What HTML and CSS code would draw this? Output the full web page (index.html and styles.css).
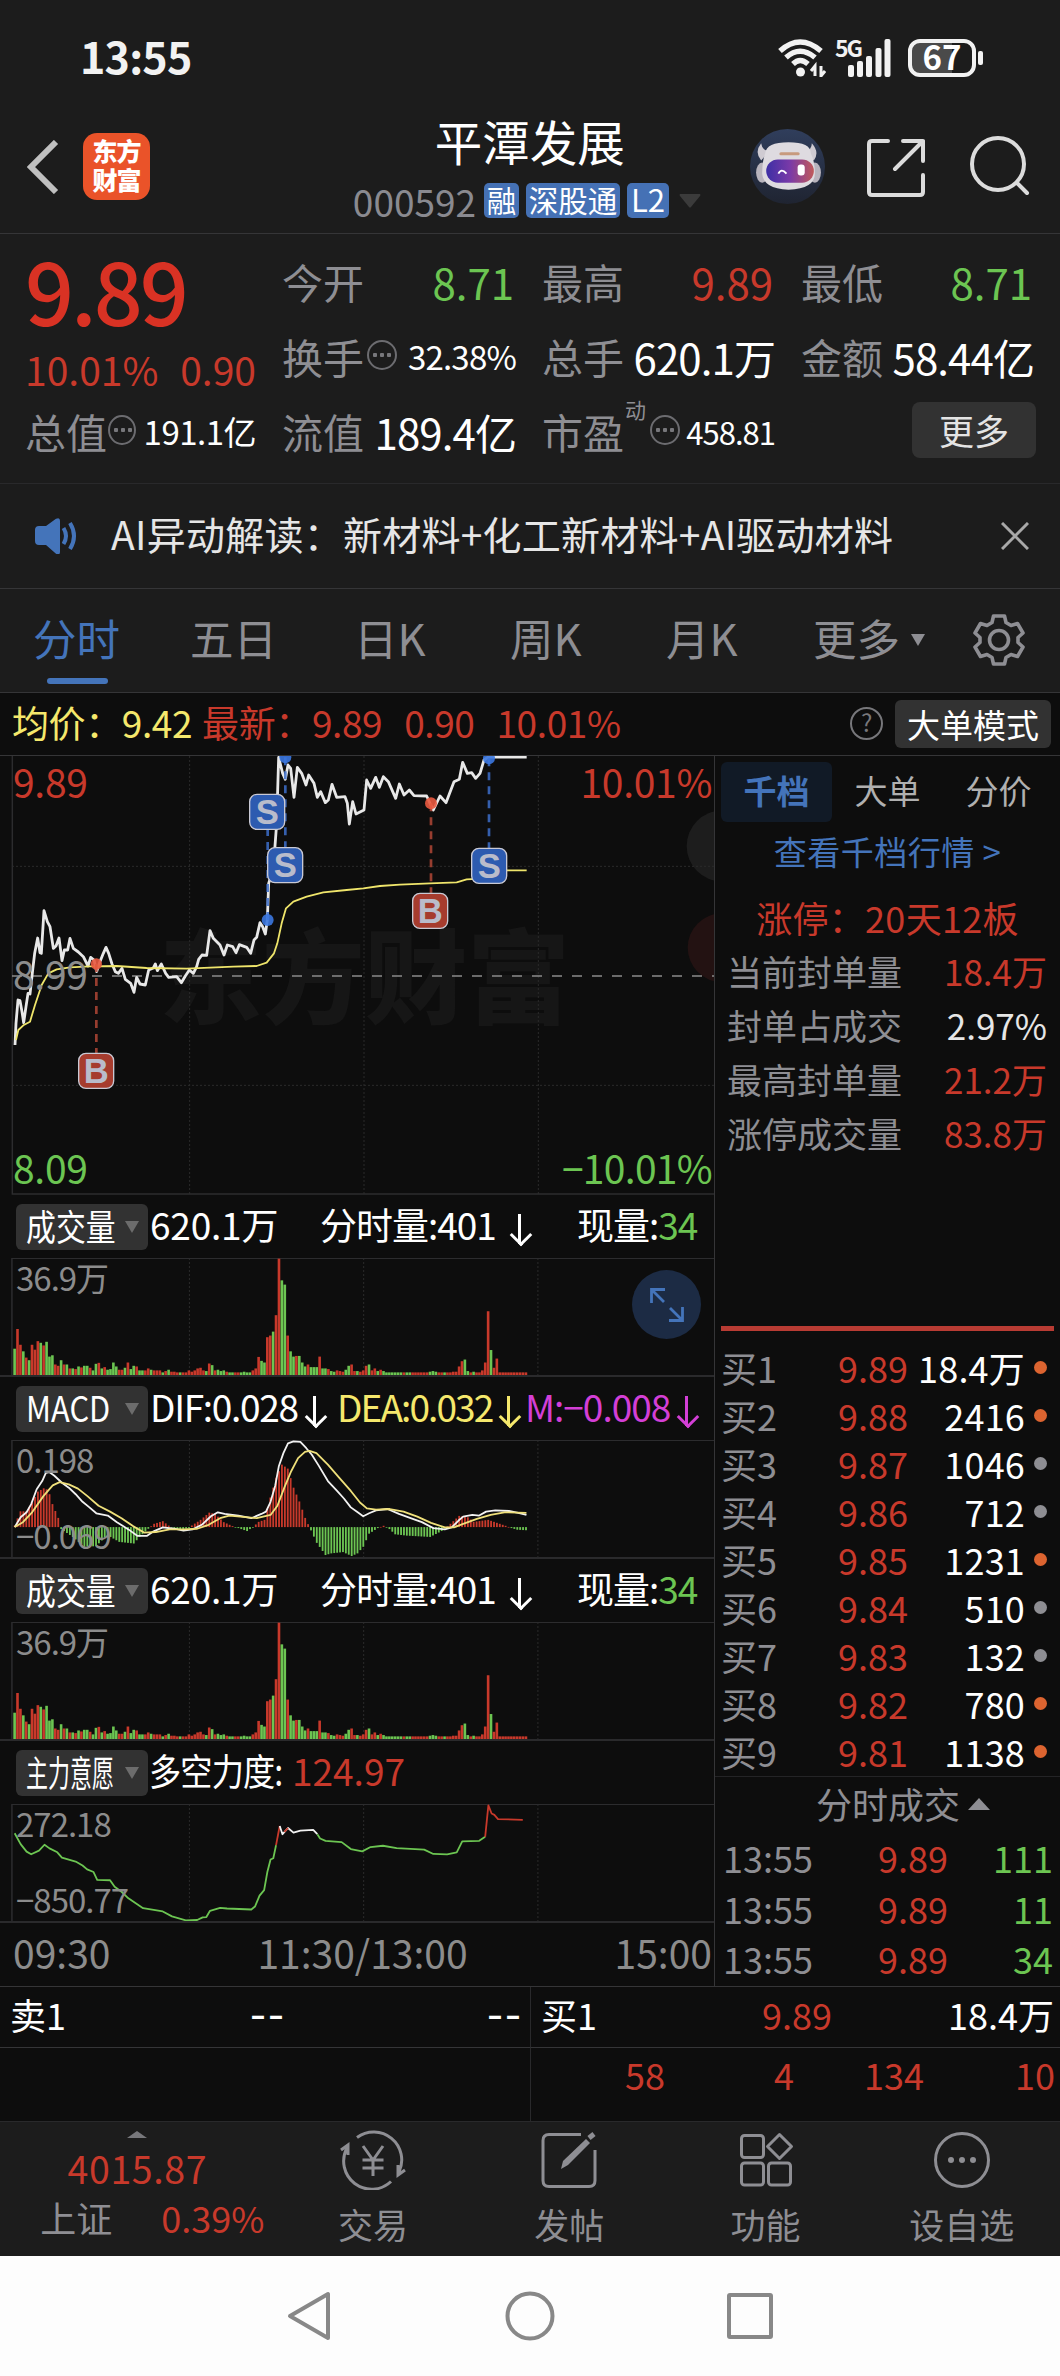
FILE: index.html
```
<!DOCTYPE html>
<html lang="zh-CN">
<head>
    <meta charset="UTF-8">
    <meta name="viewport" content="width=device-width, initial-scale=1.0">
    <title>平潭发展 000592</title>
    <link rel="stylesheet" href="styles.css">
</head>
<body>
    <div class="status-bar">
        <span class="clock">13:55</span>
        <div class="status-icons">
            <svg class="wifi" viewBox="0 0 48 38" fill="none" stroke="#f2f2f2" stroke-width="5.4">
                <path d="M2 12Q22 -6 43 12M8 18.500Q22 6 37 18.500M15 25Q22 18 30 25"/>
                <circle cx="22.500" cy="33" r="4.500" fill="#f2f2f2" stroke="none"/>
                <path d="M37 37V27l-4 5M43 27v10l4-5" stroke-width="3"/>
            </svg>
            <div class="signal">
                <span class="net">5G</span>
                <svg viewBox="0 0 43 38" fill="#f2f2f2">
                    <rect x="0" y="26" width="6" height="12" rx="2"/>
                    <rect x="9" y="22" width="6" height="16" rx="2"/>
                    <rect x="18" y="17" width="6" height="21" rx="2"/>
                    <rect x="27.500" y="9" width="6" height="29" rx="2"/>
                    <rect x="36.500" y="0" width="6" height="38" rx="2"/>
                </svg>
            </div>
            <div class="battery"><span>67</span></div>
            <i class="battery-nub"></i>
        </div>
    </div>

    <header class="header">
        <svg class="back" viewBox="0 0 32 54" fill="none" stroke="#c0c0c0" stroke-width="6"><path d="M29 2L4 27l25 25"/></svg>
        <div class="logo">东方<br>财富</div>
        <div class="title">
            <h1>平潭发展</h1>
            <div class="sub">
                <span class="code">000592</span>
                <span class="tag">融</span>
                <span class="tag">深股通</span>
                <span class="tag wide">L2</span>
                <svg class="caret" viewBox="0 0 22 14" fill="#3b3b3b"><path d="M1 0h20q1 1 0 2l-9 11q-1 1-2 0L1 2q-1-1 0-2z"/></svg>
            </div>
        </div>
        <svg class="robot" viewBox="0 0 74 74">
            <defs>
                <linearGradient id="visor" x1="0" x2="1"><stop offset="0" stop-color="#3d2fa5"/><stop offset=".5" stop-color="#7a3aa8"/><stop offset="1" stop-color="#c05a5a"/></linearGradient>
                <linearGradient id="sky" x2="0" y2="1"><stop offset="0" stop-color="#303e5c"/><stop offset="1" stop-color="#1f2431"/></linearGradient>
            </defs>
            <circle cx="37" cy="37" r="37" fill="url(#sky)"/>
            <path d="M11 14q-7 9 0 17l8-9q-7-1-8-8zM61 14q8 9 2 17l-9-9q7-1 7-8z" fill="#cfcbd2"/>
            <ellipse cx="12" cy="43" rx="6" ry="10" fill="#b8b4bd"/><ellipse cx="64" cy="43" rx="6" ry="10" fill="#b8b4bd"/>
            <path d="M15 24q1-11 23-11t22 11q4 8 4 20 0 15-26 16-25-1-26-16 0-12 3-20z" fill="#dedbe0"/>
            <rect x="16" y="30" width="47" height="23" rx="11.500" fill="url(#visor)"/>
            <path d="M28 44q3-6 8 0" fill="none" stroke="#fff" stroke-width="1.800"/>
            <rect x="47" y="35" width="7" height="11" rx="3" fill="#fff"/>
            <rect x="29" y="23" width="20" height="3" rx="1.500" fill="#c79a7e"/>
        </svg>
        <svg class="share" viewBox="0 0 58 60" fill="none" stroke="#dcdcdc" stroke-width="4" stroke-linecap="round" stroke-linejoin="round">
            <path d="M21 4H5q-3 0-3 3v48q0 3 3 3h48q3 0 3-3V38M36 4h20v20M56 4L28 32"/>
        </svg>
        <svg class="search" viewBox="0 0 60 60" fill="none" stroke="#dcdcdc" stroke-width="4" stroke-linecap="round"><circle cx="28" cy="28" r="26"/><path d="M47 47l10 10"/></svg>
    </header>

    <section class="quote">
        <div class="main-price">
            <div class="price">9.89</div>
            <div class="change"><span>10.01%</span><span>0.90</span></div>
        </div>
        <div class="cell"><label>今开</label><b class="num green">8.71</b></div>
        <div class="cell"><label>最高</label><b class="num red">9.89</b></div>
        <div class="cell"><label>最低</label><b class="num green">8.71</b></div>
        <div class="cell"><label>换手</label><i class="more-dot"></i><b class="mid">32.38%</b></div>
        <div class="cell"><label>总手</label><b>620.1万</b></div>
        <div class="cell"><label>金额</label><b>58.44亿</b></div>
        <div class="cell"><label>总值</label><i class="more-dot"></i><b class="small">191.1亿</b></div>
        <div class="cell"><label>流值</label><b>189.4亿</b></div>
        <div class="cell"><label>市盈<sup>动</sup></label><i class="more-dot"></i><b class="small last">458.81</b></div>
        <div class="cell end"><button class="more-btn">更多</button></div>
    </section>

    <section class="notice">
        <svg class="speaker" viewBox="0 0 44 36"><path d="M1 12q0-4 4-4h7L22 .800q4-2 4 2v31q0 4-4 2L12 27H5q-4 0-4-4z" fill="#4474ba"/><path d="M29.500 10q5 8 0 16M36 5q8 13 0 26" fill="none" stroke="#4474ba" stroke-width="4"/></svg>
        <span class="notice-text">AI异动解读：新材料+化工新材料+AI驱动材料</span>
        <svg class="close" viewBox="0 0 28 28" stroke="#a8a8a8" stroke-width="3"><path d="M1 1l26 26M27 1L1 27"/></svg>
    </section>

    <nav class="tabs">
        <a class="active">分时</a>
        <a>五日</a>
        <a>日K</a>
        <a>周K</a>
        <a>月K</a>
        <a class="drop">更多<i class="tri"></i></a>
        <svg class="gear" viewBox="0 0 52 52" fill="none" stroke="#8e8e93" stroke-width="3.600" stroke-linejoin="round">
            <path d="M20.500 2h11l1.500 6.500 5 3 6.500-2 5.500 9.500-5 4.500v5l5 4.500-5.500 9.500-6.500-2-5 3-1.500 6.500h-11L19 43.500l-5-3-6.500 2L2 33l5-4.500v-5L2 19l5.500-9.500 6.500 2 5-3z"/>
            <circle cx="26" cy="26" r="9.500"/>
        </svg>
    </nav>

    <div class="info-bar">
        <span class="yellow avg">均价：9.42</span>
        <span class="red">最新：9.89</span>
        <span class="red">0.90</span>
        <span class="red">10.01%</span>
        <span class="help">?</span>
        <button class="mode-btn">大单模式</button>
    </div>

    <main class="board">
        <div class="charts">
            <div class="chart price-chart">
                <svg viewBox="0 48 2142 1317" preserveAspectRatio="none">
                    <text x="478" y="828" class="watermark">东方财富</text>
                    <circle cx="2166" cy="318" r="106" fill="#1d1d1d"/>
                    <circle cx="2166" cy="623" r="103" fill="#231212"/>
                    <g class="grid"><path d="M36 379H2142M36 1036H2142M569 48V1362M1092 48V1362M1615 48V1362"/></g>
                    <path class="frame" d="M37 48V1362H2142"/>
                    <path d="M36 708H2142" stroke="#8a8a8a" stroke-width="5" stroke-dasharray="30 30"/>
                    <polyline class="line thick" stroke="#e8e8e8" points="45,915 48,850 54,780 60,782 66,815 71,848 78,800 84,760 90,762 98,690 104,640 113,594 120,638 124,640 132,512 142,545 150,560 160,625 168,618 177,594 186,662 193,630 203,630 210,595 220,625 235,636 250,650 264,678 272,652 282,660 290,695 298,670 310,640 318,622 326,640 336,672 346,695 355,700 366,685 376,718 392,730 402,757 410,712 420,732 436,735 446,690 460,684 466,672 472,692 484,672 497,700 506,712 530,710 544,728 556,708 568,690 580,700 590,680 596,658 606,645 620,646 630,572 640,595 660,615 672,645 682,615 698,620 708,638 718,614 740,622 752,640 762,600 770,592 780,548 788,560 796,582 802,540 806,430 820,385 830,250 836,52 848,100 856,118 864,75 872,85 882,172 892,82 905,100 918,135 926,105 942,130 952,172 962,155 976,188 985,180 996,133 1010,172 1035,170 1042,190 1048,252 1058,185 1068,222 1092,210 1100,120 1112,145 1127,112 1138,142 1150,110 1165,125 1187,175 1198,132 1212,165 1228,150 1242,167 1280,168 1290,190 1300,210 1320,168 1338,188 1362,125 1378,118 1388,67 1402,100 1415,98 1427,115 1440,100 1452,60 1465,51 1580,51"/>
                    <polyline class="line" stroke="#efe56b" points="48,900 55,870 70,856 90,845 105,795 125,735 145,700 170,688 210,682 270,679 350,678 440,684 560,686 700,680 770,678 800,668 822,640 832,610 845,550 858,505 880,485 920,470 970,457 1040,450 1090,445 1140,438 1200,434 1290,430 1370,427 1400,418 1460,415 1480,395 1500,391 1580,391"/>
                    <g class="stem buy"><path d="M289 672V940M1293 190V460"/></g>
                    <g class="stem sell"><path d="M803 540V268M856 52V322M1467 55V325"/></g>
                    <g fill="#e8593f" opacity=".9"><circle cx="289" cy="672" r="17"/><circle cx="1293" cy="190" r="18"/></g>
                    <g fill="#3b77e0" opacity=".9"><circle cx="803" cy="540" r="18"/><circle cx="856" cy="52" r="18"/><circle cx="1467" cy="55" r="18"/></g>
                    <g class="mark sell"><rect x="749" y="163" width="105" height="105" rx="22"/><text x="802" y="252">S</text></g>
                    <g class="mark sell"><rect x="803" y="323" width="105" height="105" rx="22"/><text x="856" y="412">S</text></g>
                    <g class="mark sell"><rect x="1415" y="325" width="105" height="105" rx="22"/><text x="1468" y="414">S</text></g>
                    <g class="mark buy"><rect x="236" y="940" width="105" height="105" rx="22"/><text x="289" y="1029">B</text></g>
                    <g class="mark buy"><rect x="1238" y="460" width="105" height="105" rx="22"/><text x="1291" y="549">B</text></g>
                </svg>
                <span class="lab tl red">9.89</span>
                <span class="lab tr red">10.01%</span>
                <span class="lab ml">8.99</span>
                <span class="lab bl green">8.09</span>
                <span class="lab br green">−10.01%</span>
            </div>

            <div class="ind-head"><span class="chip"><em class="fit3">成交量</em><i class="tri"></i></span><span class="c1">620.1万</span><span class="c2">分时量:401<u></u></span><span class="c3">现量:<b class="green">34</b></span></div>
            <div class="chart sub-chart">
                <svg class="volume" viewBox="0 235 1557 356" preserveAspectRatio="none"></svg>
                <span class="lab tl">36.9万</span>
                <span class="expand"><svg viewBox="0 0 34 34" fill="none" stroke="#4474ba" stroke-width="2.800"><path d="M1.500 15V1.500H15M1.500 1.500L14 14M32.500 19v13.500H19M32.500 32.500L20 20"/></svg></span>
            </div>

            <div class="ind-head macd-head"><span class="chip"><em class="fit4">MACD</em><i class="tri"></i></span><span class="c1">DIF:0.028<u></u></span><span class="yellow c2">DEA:0.032<u></u></span><span class="pink c3">M:−0.008<u></u></span></div>
            <div class="chart sub-chart">
                <svg viewBox="0 780 1557 356" preserveAspectRatio="none">
                    <g class="grid"><path d="M413 780V1136M793 780V1136M1173 780V1136"/></g>
                    <path class="frame" d="M26 1136V781H1557"/>
                    <g id="macd-bars"></g>
                    <polyline class="line" stroke="#f2f2f2" points="32,1045 45,1015 58,1000 68,975 80,930 92,905 100,880 108,878 118,888 135,910 150,925 165,945 180,968 195,985 210,1003 235,1010 255,1030 280,1052 300,1072 320,1072 335,1058 355,1046 380,1050 400,1056 420,1052 440,1038 460,1012 475,1000 490,1005 520,1010 548,1018 570,1005 580,998 590,968 600,920 608,860 618,820 628,790 640,784 655,786 668,805 680,825 695,858 715,905 735,935 750,958 765,985 780,1000 792,1012 805,1003 820,994 845,990 870,1005 900,1020 920,1030 945,1048 970,1052 985,1046 1000,1025 1010,1013 1030,1008 1045,1010 1060,998 1080,994 1110,996 1130,1002 1148,1008"/>
                    <polyline class="line" stroke="#efe07a" points="32,1045 50,1030 70,1000 95,950 115,918 130,908 150,915 170,928 190,950 215,980 240,998 265,1018 290,1042 315,1062 340,1060 370,1052 400,1052 430,1050 455,1038 480,1018 500,1010 530,1014 560,1018 590,1008 605,980 620,925 635,875 650,835 665,816 675,813 690,820 715,855 740,895 765,935 785,970 800,988 820,992 850,990 880,998 910,1013 940,1032 970,1046 990,1046 1010,1035 1040,1020 1070,1008 1100,1000 1148,1002"/>
                </svg>
                <span class="lab tl">0.198</span>
                <span class="lab bl">−0.069</span>
            </div>

            <div class="ind-head"><span class="chip"><em class="fit3">成交量</em><i class="tri"></i></span><span class="c1">620.1万</span><span class="c2">分时量:401<u></u></span><span class="c3">现量:<b class="green">34</b></span></div>
            <div class="chart sub-chart">
                <svg class="volume" viewBox="0 235 1557 356" preserveAspectRatio="none"></svg>
                <span class="lab tl">36.9万</span>
            </div>

            <div class="ind-head"><span class="chip"><em class="fit5">主力意愿</em><i class="tri"></i></span><span class="force">多空力度:</span><span class="red force-val">124.97</span></div>
            <div class="chart sub-chart">
                <svg viewBox="0 733 1557 356" preserveAspectRatio="none">
                    <g class="grid"><path d="M413 733V1089M793 733V1089M1173 733V1089"/></g>
                    <path class="frame" d="M26 1089V734H1557"/>
                    <polyline class="line" stroke="#6cc552" points="32,822 45,855 58,878 68,886 85,875 97,857 108,868 125,880 135,896 165,908 180,920 190,932 204,940 212,964 240,965 250,985 265,1000 280,1020 312,1050 355,1060 375,1075 405,1087 430,1086 442,1078 450,1077 458,1058 480,1049 495,1051 548,1054 556,1045 566,1012 576,995 583,940 590,902 596,898 602,858"/>
                    <polyline class="line" stroke="#c8392b" points="602,858 610,800"/>
                    <polyline class="line" stroke="#f2f2f2" points="610,800 616,825 628,806 640,820 655,814 683,812 692,825"/>
                    <polyline class="line" stroke="#c8392b" points="620,818 628,806"/>
                    <polyline class="line" stroke="#6cc552" points="692,825 698,838 710,845 745,849 765,870 790,877 808,864 835,860 865,867 925,872 945,885 975,886 996,880 1008,847 1045,845 1058,833"/>
                    <polyline class="line" stroke="#c8392b" points="1058,833 1065,737 1072,762 1078,766 1086,779 1140,781"/>
                </svg>
                <span class="lab tl">272.18</span>
                <span class="lab bl">−850.77</span>
            </div>
            <div class="axis"><span>09:30</span><span>11:30/13:00</span><span>15:00</span></div>
        </div>

        <aside class="side">
            <div class="side-tabs"><a class="active">千档</a><a>大单</a><a>分价</a></div>
            <a class="depth-link">查看千档行情 &gt;</a>
            <div class="limit">涨停：20天12板</div>
            <div class="kv"><span>当前封单量</span><b class="red">18.4万</b></div>
            <div class="kv"><span>封单占成交</span><b>2.97%</b></div>
            <div class="kv"><span>最高封单量</span><b class="red">21.2万</b></div>
            <div class="kv"><span>涨停成交量</span><b class="red">83.8万</b></div>
            <div class="divider"></div>
            <div class="bids">
                <div class="bid hot"><span>买1</span><b>9.89</b><em>18.4万</em></div>
                <div class="bid hot"><span>买2</span><b>9.88</b><em>2416</em></div>
                <div class="bid"><span>买3</span><b>9.87</b><em>1046</em></div>
                <div class="bid"><span>买4</span><b>9.86</b><em>712</em></div>
                <div class="bid hot"><span>买5</span><b>9.85</b><em>1231</em></div>
                <div class="bid"><span>买6</span><b>9.84</b><em>510</em></div>
                <div class="bid"><span>买7</span><b>9.83</b><em>132</em></div>
                <div class="bid hot"><span>买8</span><b>9.82</b><em>780</em></div>
                <div class="bid hot"><span>买9</span><b>9.81</b><em>1138</em></div>
            </div>
            <div class="ticks-title">分时成交<i></i></div>
            <div class="tick"><span>13:55</span><b>9.89</b><em>111</em></div>
            <div class="tick"><span>13:55</span><b>9.89</b><em>11</em></div>
            <div class="tick"><span>13:55</span><b>9.89</b><em>34</em></div>
        </aside>
    </main>

    <section class="level">
        <div class="level-row ask"><span>卖1</span><span class="dash">--</span><span class="dash">--</span></div>
        <div class="level-row"><span>买1</span><span class="red">9.89</span><span>18.4万</span></div>
        <div class="queue"></div>
        <div class="queue red"><span>58</span><span>4</span><span>134</span><span>10</span></div>
    </section>

    <footer class="toolbar">
        <div class="index">
            <i></i>
            <div class="index-val red">4015.87</div>
            <div class="index-row"><span>上证</span><span class="red">0.39%</span></div>
        </div>
        <a>
            <svg viewBox="0 0 66 60" fill="none" stroke="#8e8e93" stroke-width="3"><path d="M17 7.500A28 28 0 0 1 59 42M51 51.500A28 28 0 0 1 7 18M1 20l7-5v10M65 40l-7 5V35"/><path d="M23 16l10 14 10-14M33 30v16M22.500 30h21M22.500 38h21"/></svg>
            交易
        </a>
        <a>
            <svg viewBox="0 0 66 60" fill="none" stroke="#8e8e93" stroke-width="3"><path d="M45 4.500H13q-6 0-6 6v40q0 6 6 6h40q6 0 6-6V20"/><path d="M25 39l2-8L50 9l4 4-22 22z" fill="#8e8e93" stroke="none"/><path d="M53 8l5-4" stroke-width="5"/></svg>
            发帖
        </a>
        <a>
            <svg viewBox="0 0 66 60" fill="none" stroke="#8e8e93" stroke-width="3"><rect x="8.500" y="5.500" width="22" height="22" rx="3"/><rect x="8.500" y="33" width="22" height="22" rx="3"/><rect x="35.500" y="33" width="22" height="22" rx="3"/><path d="M46.500 4.500L58.500 16.500 46.500 28.500 34.500 16.500z" stroke-linejoin="round"/></svg>
            功能
        </a>
        <a>
            <svg viewBox="0 0 66 60" fill="none" stroke="#8e8e93" stroke-width="3"><circle cx="33" cy="30" r="26.500"/><g fill="#8e8e93" stroke="none"><circle cx="22" cy="30" r="3"/><circle cx="33" cy="30" r="3"/><circle cx="44" cy="30" r="3"/></g></svg>
            设自选
        </a>
    </footer>

    <div class="sys-nav">
        <svg viewBox="0 0 50 52"><path d="M43 4v44L5 26z"/></svg>
        <svg viewBox="0 0 50 52"><circle cx="25" cy="26" r="22.500"/></svg>
        <svg viewBox="0 0 50 52"><rect x="4" y="5" width="42" height="42" rx="1"/></svg>
    </div>

    <script src="script.js"></script>
</body>
</html>
```
FILE: styles.css
```
* { box-sizing: border-box; }
body { margin: 0; width: 1060px; background: #1c1c1c; color: #fff; font-family: "Noto Sans CJK SC", "Noto Sans", sans-serif; font-size: 38px; line-height: 1; white-space: nowrap; }
b, em, i, u { font-weight: 400; font-style: normal; text-decoration: none; }
h1 { margin: 0; font-weight: 400; }
svg { display: block; flex: none; }
button { border: none; color: inherit; font: inherit; padding: 0; }
.red { color: #c8392b; }
.green { color: #6cc552; }
.yellow { color: #f5e86c; }
.pink { color: #d33fd6; }

.status-bar { height: 110px; display: flex; justify-content: space-between; padding: 39px 77px 0 80px; }
.clock { font-size: 43px; font-weight: 700; line-height: 33px; letter-spacing: -.800px; color: #f2f2f2; }
.status-icons { display: flex; }
.wifi { width: 48px; height: 38px; }
.signal { display: flex; margin-left: 9px; width: 54px; }
.signal svg { width: 43px; height: 38px; margin-left: -12px; }
.net { font-size: 23px; font-weight: 700; line-height: 17px; letter-spacing: -2px; width: 25px; color: #f2f2f2; }
.battery { width: 68px; height: 38px; margin-left: 19px; border: 4px solid #f2f2f2; border-radius: 12px; background: linear-gradient(90deg, #4a4a4a 66%, transparent 66%); text-align: center; font-size: 33px; font-weight: 700; line-height: 26px; }
.battery-nub { width: 5px; height: 14px; margin: 12px 0 0 2px; border-radius: 2px; background: #f2f2f2; }

.header { height: 124px; display: flex; padding: 0 30px 0 27px; border-bottom: 1px solid #353537; }
.back { width: 32px; height: 54px; margin-top: 30px; }
.logo { width: 67px; height: 67px; margin: 23px 0 0 24px; padding-top: 3px; border-radius: 14px; background: #ea5329; font-size: 25px; font-weight: 900; line-height: 29px; text-align: center; letter-spacing: -1px; }
.title { width: 352px; margin-left: 202px; }
.title h1 { margin-left: 83px; font-size: 47.500px; line-height: 62px; }
.sub { display: flex; align-items: center; height: 35px; margin-top: 11px; }
.code { width: 132px; padding-left: 1px; font-size: 37px; color: #8a8a90; line-height: 30px; }
.tag { height: 35px; margin-right: 6.500px; padding: 0 3px; border-radius: 5px; background: #4571b5; font-size: 29.500px; line-height: 32px; }
.tag.wide { padding: 0 4px; font-size: 31px; }
.caret { width: 22px; height: 14px; margin-left: 4px; }
.robot { width: 75px; height: 75px; margin: 19px 0 0 47px; }
.share { width: 58px; height: 60px; margin: 27px 0 0 42px; }
.search { width: 60px; height: 60px; margin: 26px 0 0 45px; }

.quote { height: 250px; display: grid; grid-template-columns: 231px 234px 233px 233px; grid-template-rows: 75px 75px 75px; column-gap: 26px; padding: 10px 0 0 25px; border-bottom: 1px solid #29292b; }
.main-price { grid-row: span 2; }
.price { font-size: 86px; font-weight: 500; line-height: 90px; letter-spacing: -3px; color: #d93224; }
.change { display: flex; justify-content: space-between; padding-top: 5px; font-size: 39px; line-height: 60px; color: #c8392b; }
.cell { display: flex; justify-content: space-between; align-items: center; }
.cell label { position: relative; font-size: 41px; color: #8e8e93; }
.cell b { font-size: 42px; letter-spacing: -.900px; }
.cell b.num { letter-spacing: 0; margin-right: 2px; }
.cell b.mid, .cell b.small { font-size: 33px; letter-spacing: -.500px; }
.cell b.mid { letter-spacing: -.800px; }
.cell b.small.last { font-size: 31px; letter-spacing: -1px; }
.cell sup { position: absolute; left: 83px; top: -12px; font-size: 21px; line-height: 1; }
.more-dot { width: 30px; height: 30px; margin: -4px 8px 0 1px; border: 2px solid #6c6c70; border-radius: 50%; background: radial-gradient(circle at 6px 13px, #77777b 2px, transparent 2.500px), radial-gradient(circle at 13px 13px, #77777b 2px, transparent 2.500px), radial-gradient(circle at 20px 13px, #77777b 2px, transparent 2.500px); }
.cell:nth-child(10) .more-dot { margin-left: 25px; margin-right: 6px; }
.cell.end { justify-content: flex-end; }
.more-btn { width: 124px; height: 56px; margin: -3px -2px 0 0; border-radius: 8px; background: #323232; color: #e4e4e4; font-size: 35px; line-height: 50px; }

.notice { height: 105px; display: flex; align-items: center; padding: 0 32px 0 34px; border-bottom: 1px solid #353537; color: #e6e6e6; }
.speaker { width: 44px; height: 36px; }
.notice-text { margin: -5px auto 0 33px; font-size: 39px; letter-spacing: .250px; }
.close { width: 28px; height: 28px; margin-right: -1px; }

.tabs { height: 104px; display: flex; align-items: center; padding-left: 33px; border-bottom: 1px solid #353537; font-size: 43.500px; color: #8e8e93; }
.tabs a { display: flex; align-items: center; width: 160px; height: 103px; padding-bottom: 5px; }
.tabs a:nth-child(1) { width: 157px; }
.tabs a:nth-child(2) { width: 164px; }
.tabs a:nth-child(3) { width: 156px; }
.tabs a:nth-child(4) { width: 156px; }
.tabs a:nth-child(5) { width: 147px; }
.tabs .active { position: relative; color: #4474ba; }
.tabs .active::after { content: ""; position: absolute; left: 14px; bottom: 8px; width: 61px; height: 6px; border-radius: 3px; background: #4474ba; }
.tabs .tri { margin: 4px 0 0 11px; border: 7.500px solid transparent; border-top: 12px solid #8e8e93; border-bottom: 0; }
.gear { width: 52px; height: 52px; margin-top: -1px; }

.info-bar { height: 63px; display: flex; align-items: center; padding: 0 9px 0 12px; background: #0d0d0d; border-bottom: 1px solid #353537; font-size: 37px; }
.info-bar span { margin: -4px 22px 0 0; letter-spacing: -.400px; }
.info-bar .avg { margin-right: 10px; }
.info-bar .help { width: 33px; height: 33px; margin: -1px 12px 0 auto; border: 2px solid #77777b; border-radius: 50%; color: #77777b; font-size: 24px; line-height: 26px; text-align: center; }
.mode-btn { width: 156px; height: 48px; border-radius: 6px; background: #323232; font-size: 33px; line-height: 43px; }

.board { display: flex; height: 1231px; background: #0d0d0d; border-bottom: 1px solid #353537; }
.charts { width: 715px; border-right: 1px solid #353537; }
.chart { position: relative; }
.chart > svg { width: 714px; height: 100%; }
.price-chart { height: 439px; }
.sub-chart { height: 119px; border-bottom: 2px solid #2a2a2c; }
.lab { position: absolute; left: 13px; color: #8c8c8c; font-size: 33px; line-height: 34px; letter-spacing: -1px; }
.sub-chart .lab { left: 16px; }
.sub-chart .tl { top: 2px; }
.sub-chart .bl { bottom: 5px; }
.price-chart .lab { font-size: 39px; line-height: 40px; letter-spacing: -.300px; }
.price-chart .tl, .price-chart .tr { top: 5px; }
.price-chart .ml { top: 197px; }
.price-chart .bl, .price-chart .br { bottom: 8px; }
.price-chart .br { letter-spacing: -.700px; }
.lab.tr, .lab.br { left: auto; right: 2px; }
.lab.red { color: #c8392b; }
.lab.green { color: #6cc552; }
.line { fill: none; stroke-width: 1.800px; vector-effect: non-scaling-stroke; stroke-linejoin: round; }
.thick { stroke-width: 2.800px; }
.grid path { fill: none; stroke: #2b2b2b; stroke-dasharray: 2 2; vector-effect: non-scaling-stroke; }
.frame { fill: none; stroke: #2c2c2e; stroke-width: 1.500px; vector-effect: non-scaling-stroke; }
.watermark { font-size: 308px; font-weight: 900; fill: #161616; }
.stem path { fill: none; stroke-width: 8; stroke-dasharray: 24 18; opacity: .85; }
.stem.buy { stroke: #b04636; }
.stem.sell { stroke: #3d6fca; }
.mark rect { stroke: #c9c9d4; stroke-width: 4; }
.mark text { font-family: "Liberation Sans", Arial, sans-serif; font-size: 104px; font-weight: 700; text-anchor: middle; fill: #b9bccb; }
.mark.sell rect { fill: #2d5bb0; }
.mark.buy rect { fill: #a63c2e; }

.ind-head { display: flex; align-items: center; height: 63px; padding-left: 16px; font-size: 37px; }
.ind-head > span { letter-spacing: -1px; margin-top: -4px; }
.ind-head > .chip { display: flex; align-items: center; width: 132px; height: 46px; margin-top: 1px; padding: 0 9px 0 10px; border-radius: 6px; background: #323232; justify-content: space-between; letter-spacing: 0; }
.chip em { width: 90px; font-size: 36px; margin-top: -5px; transform-origin: left; }
.chip .fit3 { transform: scaleX(.83); }
.chip .fit4 { font-size: 35px; transform: scaleX(.88); }
.chip .fit5 { transform: scaleX(.61); }
.chip .tri { border: 7.500px solid transparent; border-top: 12px solid #6c6c6c; border-bottom: 0; }
.ind-head .c1 { width: 170px; margin-left: 2px; letter-spacing: -.200px; }
.c2 { width: 257px; }
.ind-head u { display: inline-block; position: relative; width: 19px; height: 30px; margin: 0 0 -4px 14px; background: linear-gradient(currentColor, currentColor) center / 3px 100% no-repeat; }
.ind-head u::after { content: ""; position: absolute; left: 3px; bottom: 1px; width: 13px; height: 13px; border: solid currentColor; border-width: 0 3px 3px 0; transform: rotate(45deg); }
.macd-head .c1 { width: 187px; letter-spacing: -1.300px; }
.macd-head .c2 { width: 188px; letter-spacing: -1.900px; }
.macd-head u { margin-left: 7px; }
.force { margin-left: 1px; width: 143px; transform: scaleX(.87); transform-origin: left; }
.ind-head .force-val { letter-spacing: 0; }
.expand { position: absolute; right: 13px; top: 12px; width: 69px; height: 69px; padding: 17.500px; border-radius: 50%; background: #1c2b44; }
.expand svg { width: 34px; height: 34px; }
.axis { display: flex; justify-content: space-between; padding: 9px 2px 0 13px; font-size: 39px; line-height: 40px; color: #8c8c8c; }

.side { width: 345px; padding: 6px 6px 0; }
.side-tabs { display: flex; height: 60px; font-size: 33px; color: #b0b0b0; }
.side-tabs a { width: 111px; border-radius: 6px; text-align: center; line-height: 57px; }
.side-tabs .active { background: #111a26; color: #4474ba; font-weight: 700; }
.depth-link { display: block; height: 67px; color: #4474ba; font-size: 33px; line-height: 58px; text-align: center; letter-spacing: .500px; }
.limit { height: 56px; color: #c8392b; font-size: 36px; line-height: 57px; text-align: center; letter-spacing: .300px; }
.kv { display: flex; justify-content: space-between; height: 54px; padding: 0 7px 0 6px; font-size: 35px; line-height: 52px; color: #8e8e93; }
.kv b:not(.red) { color: #e6e6e6; }
.divider { height: 5px; margin: 165px 0 13px; background: #b83b33; }
.bid { display: grid; grid-template-columns: 60px 127px 117px 1fr; align-items: center; height: 48px; font-size: 36px; line-height: 44px; padding-bottom: 2px; color: #8e8e93; }
.bid::after { content: ""; width: 13px; height: 13px; margin: 0 0 0 9px; border-radius: 50%; background: #8e8e93; }
.bid.hot::after { background: #dc6430; }
.bid b, .tick b { color: #c8392b; text-align: right; }
.bid em { color: #fff; text-align: right; letter-spacing: .200px; }
.ticks-title { display: flex; height: 58px; margin: 0 -6px; padding-left: 101px; border-top: 1px solid #242426; font-size: 36px; color: #8e8e93; line-height: 53px; }
.ticks-title i { height: 12px; margin: 21px 0 0 8px; border: 11px solid transparent; border-bottom: 12px solid #8e8e93; border-top: 0; }
.tick { display: grid; grid-template-columns: 100px 125px 105px; height: 50.500px; font-size: 36px; line-height: 46px; padding-left: 2px; color: #8e8e93; }
.tick em { color: #6cc552; text-align: right; }

.level { display: grid; grid-template-columns: 530px 530px; grid-template-rows: 61px 73px; background: #0d0d0d; border-bottom: 1px solid #29292b; }
.level-row { display: grid; grid-template-columns: 140px 151px 222px; padding-left: 10px; line-height: 55px; border-bottom: 1px solid #353537; font-size: 36px; }
.level-row span + span { text-align: right; }
.level-row.ask { grid-template-columns: 140px 136px 237px; }
.level-row .dash { font-size: 46px; line-height: 46px; letter-spacing: 2px; }
.level-row:nth-child(even), .queue:nth-child(even) { border-left: 1px solid #29292b; }
.queue { display: grid; grid-template-columns: 134px 129px 130px 131px; line-height: 53px; text-align: right; font-size: 36px; }

.toolbar { display: flex; height: 134px; color: #8e8e93; font-size: 35px; }
.index { width: 275px; display: flex; flex-direction: column; align-items: center; }
.index > i { margin-top: 9px; border: 10px solid transparent; border-bottom: 7px solid #77777b; border-top: 0; }
.index-val { font-size: 37.500px; line-height: 60px; letter-spacing: .600px; }
.index-row { display: flex; width: 224px; margin-left: 30px; justify-content: space-between; font-size: 36px; line-height: 38px; }
.toolbar a { width: 196.500px; display: flex; flex-direction: column; align-items: center; line-height: 50px; }
.toolbar a svg { width: 66px; height: 60px; margin: 8px 0 9px; }

.sys-nav { display: flex; justify-content: center; gap: 170px; height: 121px; padding-top: 34px; background: #fdfdfd; }
.sys-nav svg { width: 50px; height: 52px; fill: none; stroke: #888; stroke-width: 4; stroke-linejoin: round; }
```
FILE: script.js
```
const STEP = 6.335;
const RED = '#c8392b';
const GREEN = '#6cc552';

// one entry per minute: r/g for direction, then the bar height
const volume = ('g80 r140 r92 g72 r53 g45 r92 r77 r103 g98 r90 g101 g56 g60 r32 r28 g45 r32 g32 r20 g20 r18 g26 r23 g28 g28 r22 g14 g34 r37 ' +
    'g20 r24 g16 g18 g38 g26 r16 r16 g22 r38 g18 g28 r26 g14 g14 r14 r20 g16 r14 r14 r14 g8 r12 g16 r10 r10 r8 g8 r8 r8 ' +
    'r14 r10 r14 r20 r22 r14 g12 r35 g30 r14 g16 g12 g14 r10 g8 g8 r8 r8 g8 g10 g8 g8 r14 r20 r55 g43 g38 r115 r120 g132 r182 ' +
    'r354 g288 g275 r120 g72 g56 r58 g58 g38 g26 r32 g24 g24 g24 r56 g20 g20 r18 g12 g10 r14 r12 r10 g16 g28 r32 r12 g12 r10 r14 ' +
    'r28 g32 r14 r20 g12 r16 g12 g8 g8 g8 g8 g8 g8 r8 g8 g8 r8 r8 r8 r8 r8 r8 g10 g12 g10 r8 r8 g8 r8 r8 r10 r10 ' +
    'r26 r42 g47 g12 r8 g10 r8 r8 r14 r38 r194 g76 r22 r50 r8 r8 r8 r8 r8 r8 r8 r8 r8 r8').split(' ');

// [minute, height] pairs, filled in linearly between them
const macd = [[0, 5], [2, 48], [4, 48], [6, 75], [8, 108], [10, 118], [11, 115], [12, 100], [13, 70], [15, 28], [16, -6], [20, -30], [24, -60], [28, -58], [31, -32],
    [33, -30], [36, -45], [41, -50], [43, -30], [46, -5], [48, 10], [51, 18], [54, -2], [57, -7], [60, -3], [61, 5], [64, 22], [67, 44], [69, 40], [72, 15], [75, 3],
    [77, -3], [80, -12], [82, 0], [84, 16], [86, 22], [88, 90], [90, 150], [92, 190], [94, 178], [96, 120], [98, 78], [100, 28], [102, -10], [104, -48], [107, -85],
    [109, -80], [113, -76], [116, -88], [118, -80], [120, -60], [122, -20], [125, -3], [127, 4], [129, -6], [131, -22], [135, -26], [143, -30], [147, -12], [149, 2],
    [153, 34], [156, 30], [158, 16], [163, 22], [169, 4], [171, -3], [173, -8], [177, -10]];

function rect(x, y, w, h, fill) {
    return `<rect x="${x.toFixed(1)}" y="${y}" width="${w}" height="${h}" fill="${fill}"/>`;
}

document.querySelectorAll('.volume').forEach((svg) => {
    let html = '<g class="grid"><path d="M413 235V591M793 235V591M1173 235V591"/></g><path class="frame" d="M26 591V236H1557"/>';
    volume.forEach((v, i) => {
        const h = Number(v.slice(1));
        html += rect(29 + i * STEP, 591 - h, 5.7, h, v[0] === 'r' ? RED : GREEN);
    });
    svg.innerHTML = html;
});

let bars = '';
for (let k = 1; k < macd.length; k++) {
    const [x0, y0] = macd[k - 1];
    const [x1, y1] = macd[k];
    for (let i = x0; i < x1; i++) {
        const v = y0 + (y1 - y0) * (i - x0) / (x1 - x0);
        bars += rect(30 + i * STEP, v > 0 ? 1045 - v : 1045, 4, Math.max(Math.abs(v), 2), v > 0 ? RED : GREEN);
    }
}
document.getElementById('macd-bars').innerHTML = bars;
```
